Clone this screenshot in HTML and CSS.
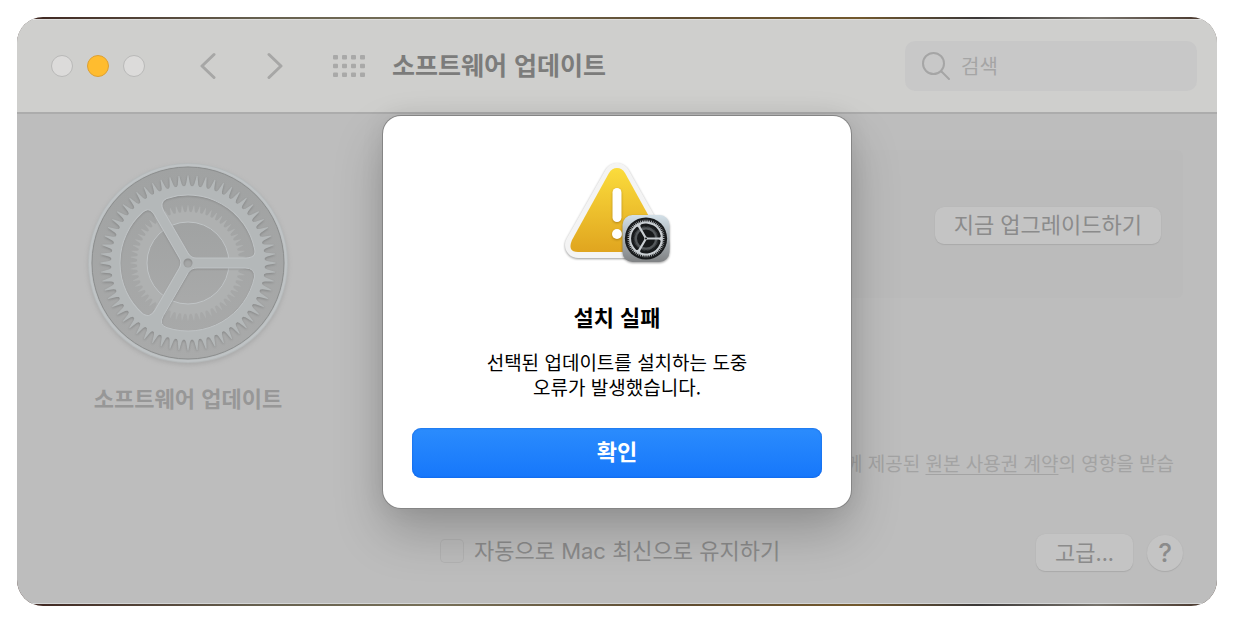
FILE: index.html
```html
<!DOCTYPE html>
<html lang="ko">
<head>
<meta charset="utf-8">
<title>소프트웨어 업데이트</title>
<link rel="stylesheet" href="styles.css">
</head>
<body>
<svg class="defs" aria-hidden="true">
  <defs>
    <linearGradient id="yellow" x1="0" y1="0" x2="0" y2="1"><stop offset="0" stop-color="#fbdc3c"/><stop offset="1" stop-color="#e0a51f"/></linearGradient>
    <linearGradient id="badge" x1="0" y1="0" x2="0" y2="1"><stop offset="0" stop-color="#d3e0e8"/><stop offset="1" stop-color="#808284"/></linearGradient>
    <linearGradient id="disc" x1="0" y1="0" x2="0" y2="1"><stop offset="0" stop-color="#a0a2a2"/><stop offset="1" stop-color="#a9aaaa"/></linearGradient>
    <g id="tooth5">
      <path id="tooth" d="M76 -3.500L79 -2L87.500 -.4V.4L79 2L76 3.500z"/>
      <use href="#tooth" transform="rotate(6)"/><use href="#tooth" transform="rotate(12)"/><use href="#tooth" transform="rotate(18)"/><use href="#tooth" transform="rotate(24)"/>
    </g>
    <g id="teeth">
      <use href="#tooth5"/><use href="#tooth5" transform="rotate(30)"/><use href="#tooth5" transform="rotate(60)"/><use href="#tooth5" transform="rotate(90)"/>
      <use href="#tooth5" transform="rotate(120)"/><use href="#tooth5" transform="rotate(150)"/><use href="#tooth5" transform="rotate(180)"/><use href="#tooth5" transform="rotate(210)"/>
      <use href="#tooth5" transform="rotate(240)"/><use href="#tooth5" transform="rotate(270)"/><use href="#tooth5" transform="rotate(300)"/><use href="#tooth5" transform="rotate(330)"/>
    </g>
    <path id="sector" d="M9 5H57Q67 5 66.500 14A68 68 0 0 1 -21 64.700Q-30 62 -24.700 52.700L.3 9.400Q3 5 9 5z"/>
    <mask id="spokes" maskUnits="userSpaceOnUse" x="-100" y="-100" width="200" height="200">
      <circle r="90" fill="#fff"/>
      <use href="#sector"/><use href="#sector" transform="rotate(120)"/><use href="#sector" transform="rotate(240)"/>
      <circle r="4.500"/>
    </mask>
    <g id="gear">
      <circle class="gear-disc" r="96"/>
      <g class="gear-inner">
        <use href="#teeth" transform="scale(.66)"/>
        <circle class="gear-ring" r="46"/>
      </g>
      <circle class="gear-edge" r="41"/>
      <g class="gear-metal"><g mask="url(#spokes)"><use href="#teeth"/><circle r="77"/></g></g>
      <g class="gear-edge"><use href="#sector"/><use href="#sector" transform="rotate(120)"/><use href="#sector" transform="rotate(240)"/></g>
    </g>
  </defs>
</svg>

<div class="desktop">
  <div class="window">
    <header class="toolbar">
      <div class="lights">
        <button class="light" aria-label="닫기"></button>
        <button class="light light-on" aria-label="최소화"></button>
        <button class="light" aria-label="확대"></button>
      </div>
      <nav class="history">
        <button class="icon-button" aria-label="뒤로"><svg width="16" height="28" viewBox="0 0 16 28"><path class="chevron" d="M14 2.500L2 14L14 25.500"/></svg></button>
        <button class="icon-button" aria-label="앞으로"><svg width="16" height="28" viewBox="0 0 16 28"><path class="chevron" d="M2 2.500L14 14L2 25.500"/></svg></button>
      </nav>
      <button class="icon-button" aria-label="모두 보기">
        <svg class="grid" width="33" height="24" viewBox="0 0 33 24">
          <g id="dots"><rect x="0" y="1" width="5" height="4.500" rx="1"/><rect x="9" y="1" width="5" height="4.500" rx="1"/><rect x="18" y="1" width="5" height="4.500" rx="1"/><rect x="27" y="1" width="5" height="4.500" rx="1"/></g>
          <use href="#dots" y="8.700"/><use href="#dots" y="17.400"/>
        </svg>
      </button>
      <h1 class="title">소프트웨어 업데이트</h1>
      <label class="search">
        <svg width="30" height="30" viewBox="0 0 30 30"><circle cx="12.500" cy="12.500" r="10.500"/><path d="M20.500 20.500L28 28"/></svg>
        <input type="search" placeholder="검색" aria-label="검색">
      </label>
    </header>

    <main class="body">
      <aside class="side">
        <svg class="pref-gear" width="204" height="204" viewBox="-102 -102 204 204" aria-hidden="true">
          <circle class="rim" r="100"/><use href="#gear"/><circle class="rim-line" r="96"/><circle class="rim-light" r="98"/>
        </svg>
        <strong class="side-label">소프트웨어 업데이트</strong>
      </aside>
      <section class="content">
        <div class="panel"><button class="button">지금 업그레이드하기</button></div>
        <p class="license">께 제공된 <a href="#license">원본 사용권 계약</a>의 영향을 받습</p>
        <div class="footer">
          <label class="auto"><input type="checkbox">자동으로 Mac 최신으로 유지하기</label>
          <button class="button">고급...</button>
          <button class="help" aria-label="도움말">?</button>
        </div>
      </section>
    </main>
  </div>

  <div class="alert" role="alertdialog" aria-labelledby="alert-title" aria-describedby="alert-text">
    <svg class="alert-icon" width="112" height="104" viewBox="0 0 112 104" aria-hidden="true">
      <g class="sign">
        <path d="M56 16L95 85H17z" fill="#f4f4f4" stroke="#f4f4f4" stroke-width="26" stroke-linejoin="round"/>
      </g>
      <path d="M56 8Q61 8 64 13L101 80Q106 92 95 92H17Q6 92 11 80L48 13Q51 8 56 8z" fill="url(#yellow)"/>
      <g class="mark"><rect x="51.500" y="28" width="9" height="34" rx="4.500"/><circle cx="56" cy="74" r="5"/></g>
      <g class="sign"><rect x="61.500" y="55" width="47" height="47" rx="10" fill="url(#badge)"/></g>
      <g class="mini-gear" transform="translate(85 78.500) scale(.22)"><use href="#gear"/></g>
    </svg>
    <h2 class="alert-title" id="alert-title">설치 실패</h2>
    <p class="alert-text" id="alert-text">선택된 업데이트를 설치하는 도중<br>오류가 발생했습니다.</p>
    <button class="confirm">확인</button>
  </div>
</div>
</body>
</html>
```

FILE: styles.css
```css
* { box-sizing: border-box; }

body {
  margin: 0;
  padding: 17px;
  background: #fff;
  font-family: "Noto Sans CJK KR", sans-serif;
}

h1, h2, p { margin: 0; }

button, input { font: inherit; color: inherit; }

button { border: 0; padding: 0; background: none; }

.defs { position: absolute; width: 0; height: 0; }

.desktop {
  position: relative;
  overflow: hidden;
  padding: 2px 0;
  border-radius: 26px;
  background: linear-gradient(90deg, #3d241f, #66604f 20%, #777058 35%, #5f4c31 55%, #73592e 70%, #3b3837 80%, #77736c 90%, #443126);
}

.window {
  background: #bdbdbd;
  border-top: 1px solid #dededd;
  border-bottom: 1px solid #d4d6d7;
}

.toolbar {
  display: flex;
  align-items: center;
  height: 94px;
  padding: 0 20px 1px 34px;
  background: #cfcfcd;
  border-bottom: 2px solid #acacac;
}

.lights { display: flex; gap: 14px; }

.light {
  width: 22px;
  height: 22px;
  border-radius: 50%;
  border: 1px solid #b9b9b8;
  background: #dcdbda;
}

.light-on { background: #ffbc2f; border-color: #dda033; }

.history { display: flex; gap: 51px; margin: 0 50px 0 55px; }

.icon-button { display: flex; }

.chevron {
  fill: none;
  stroke: #a7a7a6;
  stroke-width: 3;
  stroke-linecap: round;
  stroke-linejoin: round;
}

.grid { fill: #a9a9a8; }

.title {
  margin-left: 26px;
  padding-bottom: 4px;
  font-size: 25px;
  line-height: 36px;
  font-weight: 700;
  color: #7c7c7b;
  white-space: nowrap;
}

.search {
  display: flex;
  align-items: center;
  gap: 10px;
  width: 292px;
  height: 50px;
  margin-left: auto;
  padding: 0 16px;
  border-radius: 10px;
  background: #c8c8c8;
}

.search svg {
  flex: none;
  fill: none;
  stroke: #a5a5a5;
  stroke-width: 2;
  stroke-linecap: round;
}

.search input {
  min-width: 0;
  flex: 1;
  padding: 0;
  border: 0;
  outline: 0;
  background: none;
  font-size: 20px;
}

.search input::placeholder { color: #a5a5a5; opacity: 1; }

.body { display: flex; padding: 36px 34px 32px 0; }

.side {
  display: flex;
  flex-direction: column;
  align-items: center;
  width: 342px;
  padding-top: 11px;
}

.side-label {
  margin-top: 16px;
  font-size: 22px;
  line-height: 32px;
  color: #979797;
}

.content { flex: 1; margin-left: 81px; }

.panel {
  display: flex;
  align-items: center;
  justify-content: flex-end;
  height: 148px;
  padding: 2px 22px 0;
  border-radius: 6px;
  background: #bbb;
}

.button {
  height: 37px;
  padding: 0 19px 4px;
  border-radius: 9px;
  background: #c4c4c4;
  box-shadow: 0 1px 1px #aaa, 0 0 1px #b0b0b0;
  color: #8b8b8b;
  font-size: 22px;
  line-height: 32px;
  white-space: nowrap;
}

.license {
  margin: 151px 9px 0 0;
  color: #a3a3a3;
  font-size: 19px;
  line-height: 28px;
  text-align: right;
  white-space: nowrap;
}

.license a { color: inherit; text-underline-offset: 3px; text-decoration-thickness: 1px; }

.footer { display: flex; align-items: center; gap: 14px; margin-top: 57px; }

.auto {
  display: flex;
  align-items: center;
  gap: 10px;
  margin-right: auto;
  padding-bottom: 3px;
  color: #8b8b8b;
  font-family: Inter, "Noto Sans CJK KR", sans-serif;
  font-size: 22px;
  line-height: 34px;
  white-space: nowrap;
}

.auto input {
  appearance: none;
  width: 24px;
  height: 24px;
  margin: 0;
  border: 1px solid rgba(0, 0, 0, .05);
  border-radius: 5px;
  background: #bcbcbc;
}

.help {
  width: 36px;
  height: 36px;
  border-radius: 50%;
  background: #c4c4c4;
  box-shadow: 0 1px 1px #aaa, 0 0 1px #b0b0b0;
  color: #8b8b8b;
  font-family: Inter, sans-serif;
  font-size: 26px;
  font-weight: 500;
  line-height: 36px;
}

.pref-gear {
  --disc: url(#disc);
  --inner: #afb1b1;
  --metal: #b4b8b9;
  --edge: #c0c4c6;
  filter: drop-shadow(0 2px 2px #a9a9a9);
}

.mini-gear {
  --disc: #17191b;
  --inner: #55595c;
  --metal: #c9ced2;
  --edge: none;
}

.gear-disc { fill: var(--disc); }
.gear-inner { fill: var(--inner); }
.gear-ring { fill: var(--disc); stroke: var(--inner); stroke-width: 10; }
.gear-metal { fill: var(--metal); filter: drop-shadow(0 1px 1px rgba(0, 0, 0, .2)); }
.gear-edge { fill: none; stroke: var(--edge); stroke-width: 1; }
.rim { fill: #b6babb; }
.rim-line { fill: none; stroke: #8c8e8e; stroke-width: 1; }
.rim-light { fill: none; stroke: #bfc3c5; stroke-width: 2; }

.alert {
  position: absolute;
  top: 99px;
  left: 50%;
  transform: translateX(-50%);
  display: flex;
  flex-direction: column;
  align-items: center;
  width: 468px;
  padding: 44px 29px 30px;
  border-radius: 18px;
  background: #fff;
  box-shadow: 0 0 0 1px #858585, 0 24px 50px rgba(0, 0, 0, .22), 0 0 24px rgba(0, 0, 0, .08);
  color: #000;
  text-align: center;
}

.alert-icon { overflow: visible; }

.sign { filter: drop-shadow(0 1px 1px rgba(0, 0, 0, .4)); }

.mark { fill: #fff; filter: drop-shadow(0 1px 1px rgba(120, 80, 0, .5)); }

.alert-title { margin-top: 38px; font-size: 22px; line-height: 28px; font-weight: 700; }

.alert-text { margin-top: 19px; font-size: 19px; line-height: 25px; }

.confirm {
  align-self: stretch;
  height: 50px;
  margin-top: 29px;
  padding-bottom: 6px;
  border-radius: 9px;
  background: linear-gradient(#2b8cfd, #1677fb);
  box-shadow: inset 0 0 2px #0b58d6;
  color: #fff;
  font-size: 22px;
  font-weight: 700;
}
```
